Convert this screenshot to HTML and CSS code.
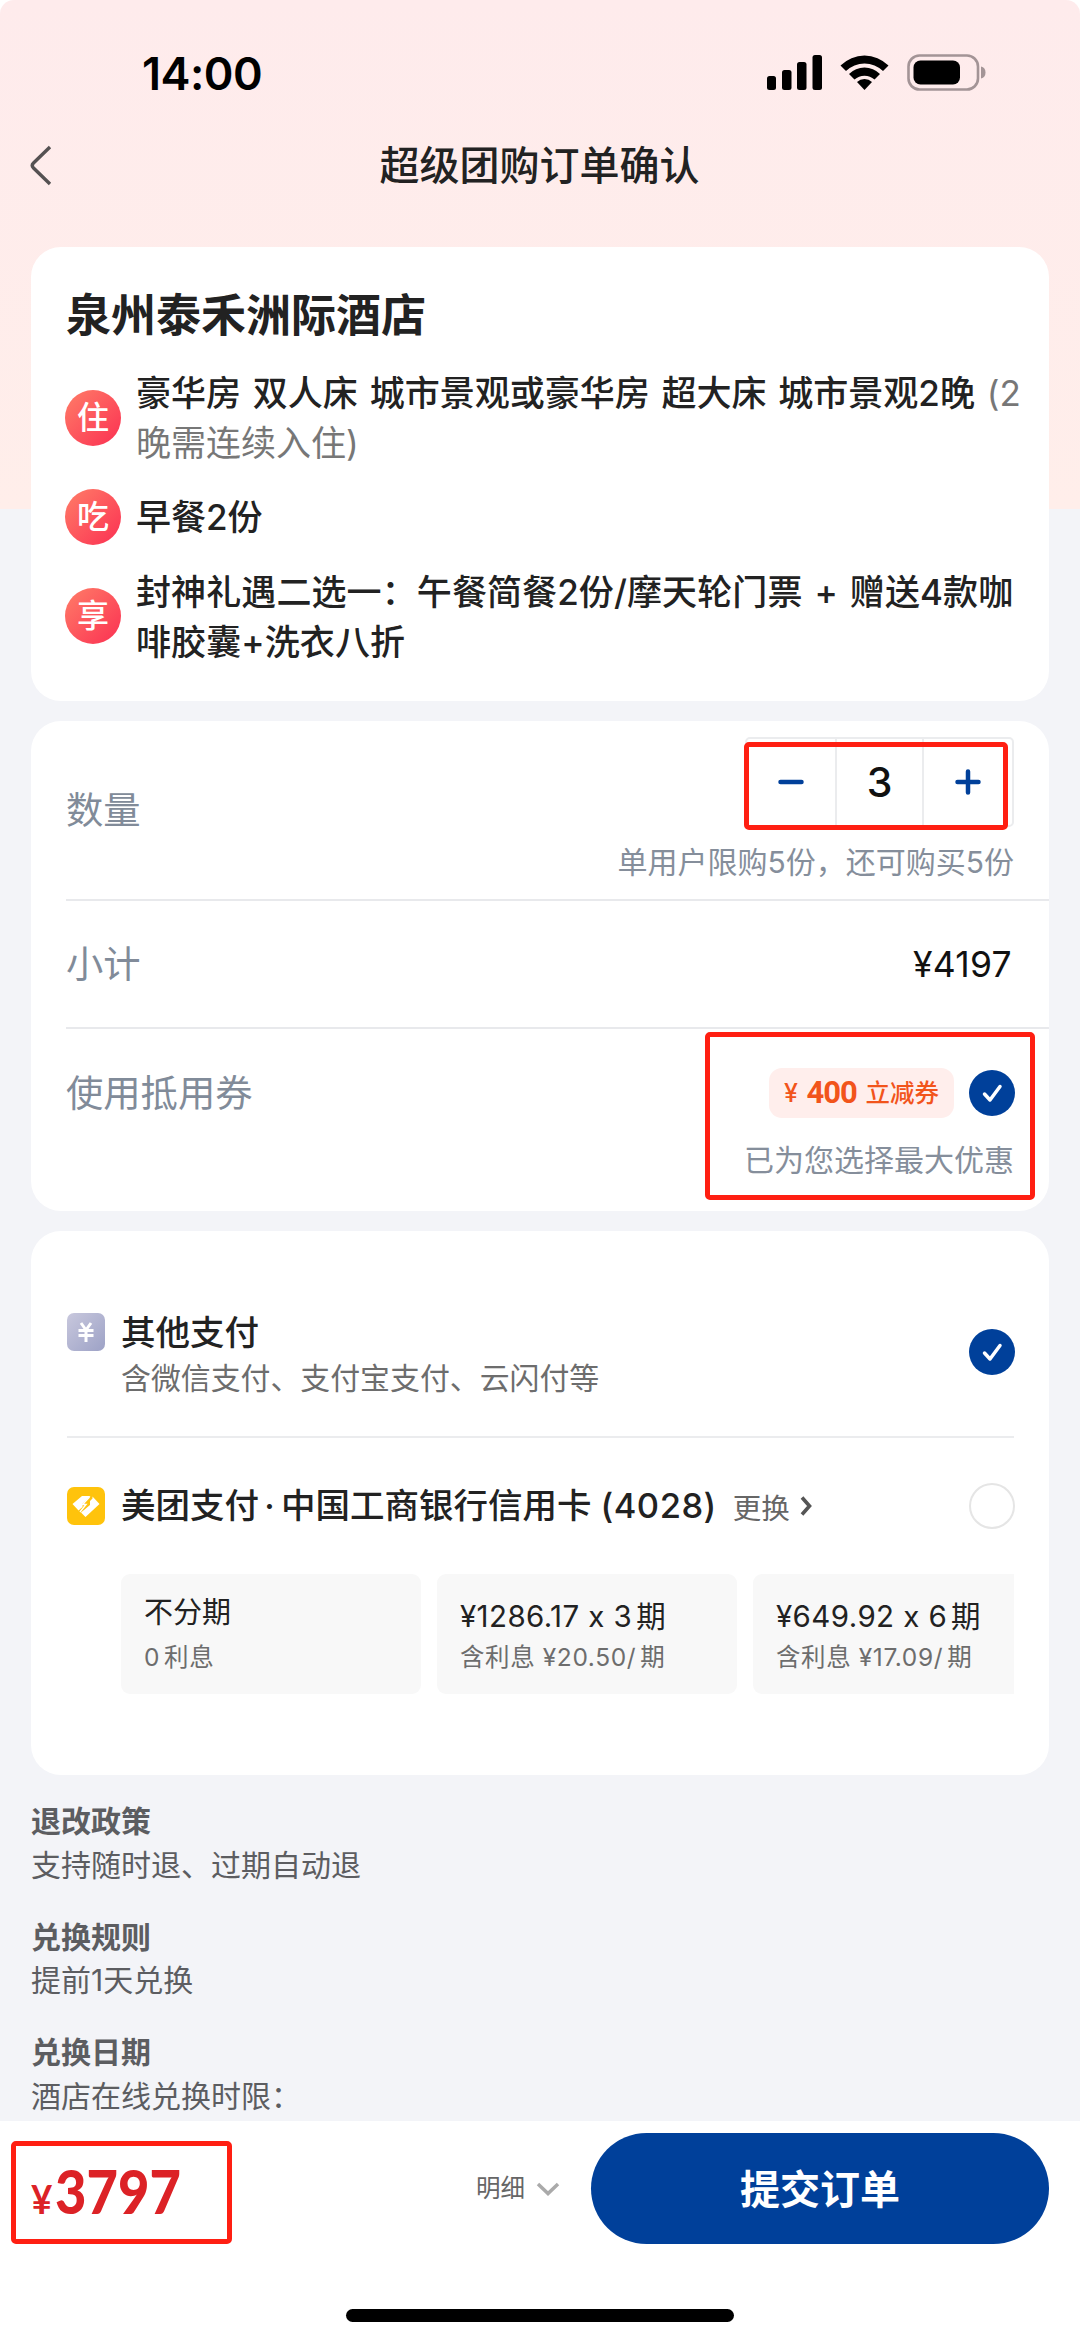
FILE: index.html
```html
<!DOCTYPE html>
<html lang="zh-CN">
<head>
<meta charset="utf-8">
<title>超级团购订单确认</title>
<link rel="stylesheet" href="styles.css">
</head>
<body>
<div class="screen">
  <div class="status">
    <span class="clock">14:00</span>
    <svg class="status-icons" width="222" height="40" viewBox="0 0 222 40">
      <rect x="1" y="22" width="9" height="14" rx="2.5"/>
      <rect x="16" y="16" width="9.500" height="20" rx="2.500"/>
      <rect x="31" y="8" width="9.500" height="28" rx="2.500"/>
      <rect x="46.500" y="1" width="9.500" height="35" rx="2.500"/>
      <path d="M74.500 11.500A34 34 0 0 1 122.500 11.500L117 17A26.500 26.500 0 0 0 80 17Z"/>
      <path d="M83 20A22 22 0 0 1 114 20L108.500 25.500A15 15 0 0 0 88.500 25.500Z"/>
      <path d="M91 28A11 11 0 0 1 106 28L98.500 36Z"/>
      <rect x="142.500" y="1.500" width="69.500" height="34" rx="11" fill="none" stroke="#a39496" stroke-width="2.600"/>
      <rect x="147.500" y="6.500" width="46.500" height="24" rx="7"/>
      <path d="M215 12.500Q219.500 13.500 219.500 18.500T215 24.500Z" fill="#a39496"/>
    </svg>
  </div>
  <div class="nav">
    <svg class="back" width="24" height="42" viewBox="0 0 24 42"><path d="M21 2 4.500 18Q2 20.500 4.500 23L21 39" fill="none" stroke="#555152" stroke-width="3.400"/></svg>
    <h1>超级团购订单确认</h1>
  </div>

  <div class="card package">
    <h2>泉州泰禾洲际酒店</h2>
    <div class="perk perk-two"><span class="tag">住</span><p>豪华房 双人床 城市景观或豪华房 超大床 城市景观2晚 <span class="light">(2<br>晚需连续入住)</span></p></div>
    <div class="perk"><span class="tag">吃</span><p>早餐2份</p></div>
    <div class="perk perk-two"><span class="tag">享</span><p>封神礼遇二选一：午餐简餐2份/摩天轮门票 + 赠送4款咖<br>啡胶囊+洗衣八折</p></div>
  </div>

  <div class="card order">
    <div class="line qty">
      <span class="label">数量</span>
      <div class="qty-side">
        <div class="stepper">
          <span><svg width="26" height="26" viewBox="0 0 26 26"><path d="M2.500 13H23.500"/></svg></span>
          <span class="count">3</span>
          <span><svg width="26" height="26" viewBox="0 0 26 26"><path d="M2.500 13H23.500M13 2.500V23.500"/></svg></span>
          <i class="mark mark-qty"></i>
        </div>
        <p class="note">单用户限购5份，还可购买5份</p>
      </div>
    </div>
    <div class="line subtotal"><span class="label">小计</span><span class="sum">¥4197</span></div>
    <div class="line coupon">
      <span class="label">使用抵用券</span>
      <div class="coupon-side">
        <div class="coupon-pick">
          <span class="voucher"><span class="yen">¥</span><b>400</b>立减券</span>
          <svg class="check" width="46" height="46" viewBox="0 0 46 46"><circle cx="23" cy="23" r="23"/><path d="M15.500 24 21 30 31 16.500"/></svg>
        </div>
        <p class="note">已为您选择最大优惠</p>
      </div>
      <i class="mark mark-coupon"></i>
    </div>
  </div>

  <div class="card pay">
    <div class="method other">
      <svg class="pay-icon" width="38" height="38" viewBox="0 0 38 38">
        <defs><linearGradient id="lilac" x1="0" y1="0" x2="1" y2="1"><stop offset="0" stop-color="#c8c8dd"/><stop offset="1" stop-color="#9da2c6"/></linearGradient></defs>
        <rect width="38" height="38" rx="7" fill="url(#lilac)"/>
        <path d="M14 10 19 17 24 10M11.500 17.500H26.500M11.500 22.500H26.500M19 17V29" fill="none" stroke="#fff" stroke-width="3"/>
      </svg>
      <div class="method-text"><p class="method-name">其他支付</p><p class="method-sub">含微信支付、支付宝支付、云闪付等</p></div>
      <svg class="check" width="46" height="46" viewBox="0 0 46 46"><circle cx="23" cy="23" r="23"/><path d="M15.500 24 21 30 31 16.500"/></svg>
    </div>
    <div class="method bank">
      <svg class="pay-icon" width="38" height="38" viewBox="0 0 38 38">
        <rect width="38" height="38" rx="7" fill="#ffc30c"/>
        <path d="M5.500 17 15 9H23.500L15.500 16.500V20L11.500 23.500Z" fill="#fff"/>
        <path d="M25.500 9.500 32.500 17 18.500 30 14 25.500 23 18V14L25.500 11.500Z" fill="#fff"/>
        <path d="M22.500 10 15.500 17.500H19L13 25" fill="none" stroke="#fff" stroke-width="1.500"/>
      </svg>
      <span class="bank-name">美团支付<span class="dot">·</span>中国工商银行信用卡<span class="digits">(4028)</span></span>
      <span class="swap">更换<svg width="14" height="22" viewBox="0 0 14 22"><path d="M3 2.500 10.500 11 3 19.500" fill="none" stroke="#555" stroke-width="3.600"/></svg></span>
      <span class="radio"></span>
    </div>
    <div class="plans">
      <div class="plan first"><p>不分期</p><small>0<i></i>利息</small></div>
      <div class="plan"><p>¥1286.17 x 3<i></i>期</p><small>含利息 ¥20.50/<i></i>期</small></div>
      <div class="plan"><p>¥649.92 x 6<i></i>期</p><small>含利息 ¥17.09/<i></i>期</small></div>
    </div>
  </div>

  <div class="rules">
    <section><h3>退改政策</h3><p>支持随时退、过期自动退</p></section>
    <section><h3>兑换规则</h3><p>提前1天兑换</p></section>
    <section><h3>兑换日期</h3><p>酒店在线兑换时限：</p></section>
  </div>

  <div class="footer">
    <div class="checkout">
      <span class="total"><span class="total-yen">¥</span><span class="total-num">3797</span></span>
      <span class="detail">明细<svg width="24" height="14" viewBox="0 0 24 14"><path d="M2 2 12 11.500 22 2" fill="none" stroke="#aaa" stroke-width="3.500"/></svg></span>
      <button class="submit">提交订单</button>
      <i class="mark mark-total"></i>
    </div>
    <div class="home"></div>
  </div>
</div>
</body>
</html>
```
FILE: styles.css
```css
* { box-sizing: border-box; }
body { margin: 0; background: #fff; font-family: Inter, "Noto Sans CJK SC", sans-serif; font-feature-settings: "calt" 0; color: #222; }
h1, h2, h3, p { margin: 0; }
.screen {
  width: 1080px; height: 2342px; overflow: hidden; border-radius: 14px 14px 0 0;
  display: flex; flex-direction: column; white-space: nowrap;
  background: linear-gradient(#feebec 0, #ffeeea 509px, #f3f4f8 509px);
}
.status { flex: none; height: 120px; padding: 49px 94px 0 142px; display: flex; justify-content: space-between; align-items: flex-start; color: #000; }
.clock { font-size: 45px; line-height: 50px; font-weight: 600; letter-spacing: -0.5px; }
.status-icons { margin-top: 5px; margin-right: -2px; }
.nav { flex: none; height: 127px; display: flex; align-items: flex-start; }
.back { margin: 25px 0 0 29px; }
.nav h1 { flex: 1; margin-right: 54px; text-align: center; font-size: 40px; font-weight: 500; line-height: 60px; padding-top: 16px; color: #222; }

.card { flex: none; margin: 0 31px; background: #fff; border-radius: 30px; }
.package { height: 454px; padding: 39px 0 0 34px; }
.package h2 { font-size: 45px; line-height: 60px; font-weight: 700; margin: 0 0 22px 1px; }
.perk { display: flex; align-items: center; gap: 15px; font-size: 35px; line-height: 50px; font-weight: 500; word-spacing: 2.5px; }
.perk-two { height: 100px; }
.perk:nth-of-type(2) { margin: 24px 0; height: 50px; }
.perk:last-child p { padding-top: 1px; letter-spacing: 0.100px; }
.tag { width: 56px; height: 56px; border-radius: 50%; flex: none; text-align: center; line-height: 56px; font-size: 32px; color: #fff; background: linear-gradient(135deg, #ff7d68, #fb3052); }
.light { font-weight: 400; color: #777; }

.order { height: 490px; margin-top: 20px; padding-left: 35px; }
.line { position: relative; display: flex; justify-content: space-between; padding-right: 35px; }
.label { font-size: 37.300px; line-height: 50px; color: #818b99; }
.note { font-size: 30px; line-height: 40px; color: #858e9b; text-align: right; }
.qty { height: 180px; border-bottom: 2px solid #e8e9ec; }
.qty .label { margin-top: 65px; }
.qty-side { padding-top: 16px; display: flex; flex-direction: column; align-items: flex-end; gap: 15px; }
.stepper { position: relative; width: 269px; height: 90px; border: 2px solid #ebecee; border-radius: 5px; display: grid; grid-template-columns: 1fr 1fr 1fr; }
.stepper span { display: flex; align-items: center; justify-content: center; }
.stepper svg { fill: none; stroke: #00409a; stroke-width: 4.5; stroke-linecap: round; }
.stepper .count { border: solid #ebecee; border-width: 0 2px; font-size: 41px; font-weight: 500; color: #111; }
.mark { position: absolute; border: 5px solid #ff1f12; border-radius: 5px; }
.mark-qty { left: -3px; top: 3px; width: 264px; height: 88px; }
.subtotal { height: 128px; align-items: center; border-bottom: 2px solid #e8e9ec; }
.subtotal .label { padding-top: 2px; }
.sum { font-size: 35.500px; color: #111; margin-right: 2px; letter-spacing: 0.300px; }
.coupon .label { margin-top: 40px; }
.coupon-side { padding-top: 39px; }
.coupon-pick { display: flex; align-items: center; justify-content: flex-end; gap: 15px; height: 50px; margin: 0 -1px 22px 0; }
.voucher { width: 185px; height: 50px; padding: 0 15px; border-radius: 13px; background: #ffeeec; color: #f2541b; font-size: 24.500px; font-weight: 500; line-height: 48px; display: flex; justify-content: space-between; align-items: center; }
.voucher b { font: bold 31px/48px Roboto, sans-serif; letter-spacing: -1px; }
.voucher .yen { font-size: 25px; }
.check { fill: #00409a; flex: none; }
.check path { fill: none; stroke: #fff; stroke-width: 3.500; stroke-linecap: round; stroke-linejoin: round; }
.mark-coupon { left: 639px; top: 3px; width: 330px; height: 168px; }

.pay { height: 544px; margin-top: 20px; padding: 0 35px 0 36px; }
.method { display: flex; }
.other { height: 207px; border-bottom: 2px solid #ebecee; padding-top: 77px; }
.other .pay-icon { margin-top: 5px; }
.other .check { margin: 21px -1px 0 0; }
.method-text { flex: 1; margin-left: 16px; padding-top: 1px; }
.method-name { font-size: 34.500px; font-weight: 500; line-height: 48px; }
.method-sub { font-size: 29.900px; line-height: 42px; color: #6d6d6d; }
.bank { height: 136px; align-items: center; }
.bank-name { margin-left: 16px; font-size: 34.500px; line-height: 48px; font-weight: 500; display: flex; align-items: baseline; }
.dot { width: 23px; margin-left: -1px; text-align: center; }
.digits { margin-left: 9px; letter-spacing: 0.500px; }
.swap { display: flex; align-items: center; gap: 9px; margin-left: 16px; font-size: 28.500px; color: #666; }
.radio { width: 46px; height: 46px; margin: 0 -1px 0 auto; border: 2px solid #e5e5e5; border-radius: 50%; }
.plans { display: flex; gap: 16px; margin-left: 54px; overflow: hidden; }
.plan { flex: none; width: 300px; height: 120px; border-radius: 9px; background: #f8f8f8; padding: 22px 0 0 23px; }
.plan p { font-size: 29.500px; line-height: 40px; letter-spacing: 0.400px; word-spacing: 0; }
.plan.first p { font-size: 29px; margin-top: -3px; margin-bottom: 3px; letter-spacing: 0; }
.plan small { display: block; font-size: 24.500px; line-height: 42px; letter-spacing: 0.600px; color: #6d6d6d; }
.plan i { display: inline-block; width: 4px; }

.rules { flex: none; height: 346px; padding: 25px 31px 0; color: #5c5d61; font-size: 30px; line-height: 43.500px; overflow: hidden; }
.rules section { margin-bottom: 28.500px; }
.rules h3 { font-size: 30px; font-weight: 700; }

.footer { height: 221px; flex: none; background: #fff; display: flex; flex-direction: column; align-items: center; }
.checkout { flex: none; position: relative; width: 100%; height: 188px; padding: 12px 31px 0; display: flex; align-items: flex-start; color: #dc2226; }
.total { width: 445px; height: 111px; display: flex; align-items: baseline; line-height: 111px; margin-top: 2px; font-family: Lato, sans-serif; font-weight: 700; font-size: 61px; }
.total-yen { width: 24px; font-size: 40px; transform: scaleX(0.920); transform-origin: left; }
.total-num { font-weight: 900; transform: scaleX(0.890); transform-origin: left; }
.detail { width: 115px; display: flex; align-items: center; gap: 11px; line-height: 111px; font-size: 24.500px; color: #666; }
.submit { width: 458px; height: 111px; border: 0; padding: 0 0 4px; border-radius: 56px; background: #00409a; color: #fff; font: 700 40px "Noto Sans CJK SC", sans-serif; }
.mark-total { left: 11px; top: 20px; width: 221px; height: 103px; }
.home { width: 388px; height: 13px; border-radius: 7px; background: #000; }
```
